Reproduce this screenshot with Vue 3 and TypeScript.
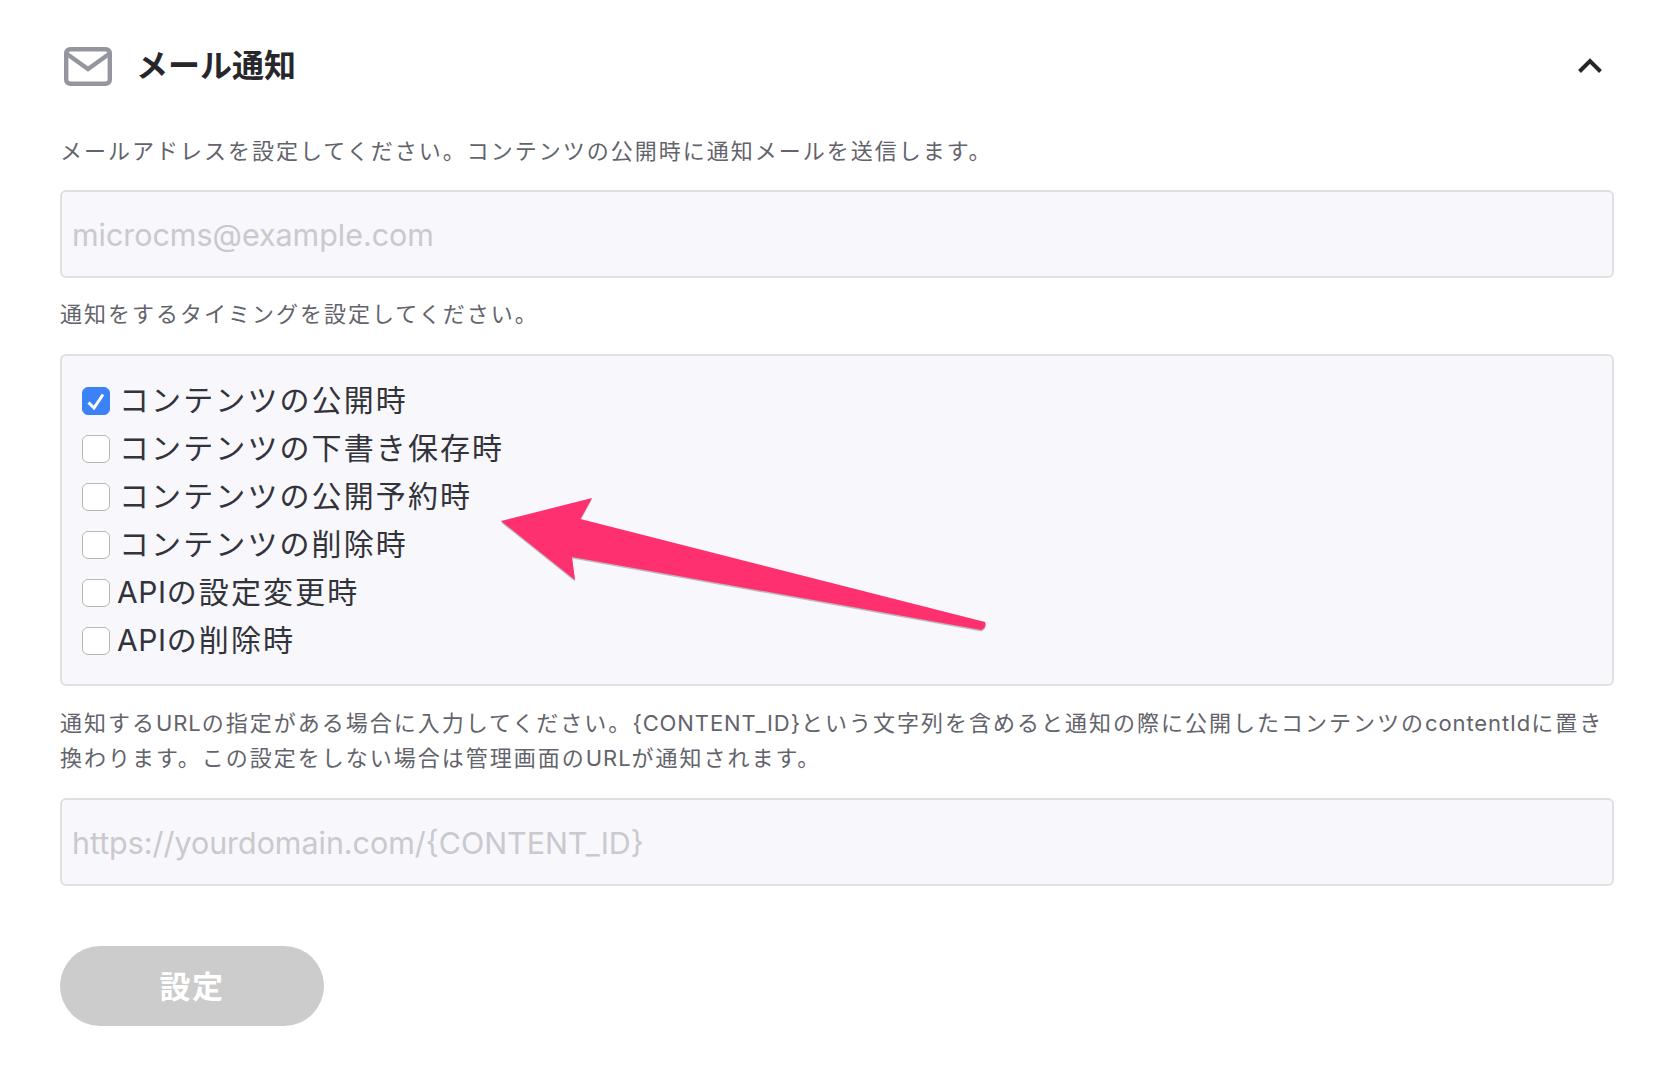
<script setup lang="ts">
import { ref } from 'vue'

const email = ref('')
const url = ref('')
const timings = ref([
  { label: 'コンテンツの公開時', checked: true },
  { label: 'コンテンツの下書き保存時', checked: false },
  { label: 'コンテンツの公開予約時', checked: false },
  { label: 'コンテンツの削除時', checked: false },
  { label: 'API', rest: 'の設定変更時', checked: false },
  { label: 'API', rest: 'の削除時', checked: false }
])
</script>

<template>
  <div class="page">
    <div class="head">
      <div class="head-title">
        <svg class="mail-icon" width="48" height="39" viewBox="0 0 48 39" fill="none">
          <rect x="2.200" y="2.200" width="43.600" height="34.600" rx="4" stroke="#95959d" stroke-width="4.400" />
          <path d="M3 7 L24 22 L45 7" stroke="#95959d" stroke-width="4.400" />
        </svg>
        <h2>メール通知</h2>
      </div>
      <svg class="chevron" width="26" height="18" viewBox="0 0 26 18" fill="none">
        <path d="M2.500 14.500 L13 4 L23.500 14.500" stroke="#26262b" stroke-width="4" />
      </svg>
    </div>

    <p class="desc first">メールアドレスを設定してください。コンテンツの公開時に通知メールを送信します。</p>
    <input class="field" type="email" placeholder="microcms@example.com" v-model="email" />

    <p class="desc second">通知をするタイミングを設定してください。</p>
    <div class="timings">
      <label class="row" v-for="t in timings" :key="t.label + t.rest">
        <span class="box" :class="{ on: t.checked }">
          <svg v-if="t.checked" width="18" height="17" viewBox="0 0 18 17" fill="none">
            <path d="M1.500 9.500 L7 15 L16 1.500" stroke="#fff" stroke-width="3" />
          </svg>
        </span>
        <span class="row-label" v-if="t.rest"><span class="latin">{{ t.label }}</span>{{ t.rest }}</span>
        <span class="row-label" v-else>{{ t.label }}</span>
      </label>
      <svg class="arrow" width="500" height="150" viewBox="0 0 500 150">
        <path d="M1 35 L92 12 L80.500 33 L485 136 Q487 141 481.500 144 L72 71 L75 94 Z" fill="#8a8a8a" opacity="0.55" transform="translate(0 1.500)" />
        <path d="M1 35 L92 12 L80.500 33 L485 136 Q487 141 481.500 144 L72 71 L75 94 Z" fill="#ff3070" />
      </svg>
    </div>

    <p class="desc third">通知する<span class="latin">URL</span>の指定がある場合に入力してください。<span class="latin">{CONTENT_ID}</span>という文字列を含めると通知の際に公開したコンテンツの<span class="latin">contentId</span>に置き換わります。この設定をしない場合は管理画面の<span class="latin">URL</span>が通知されます。</p>
    <input class="field" type="text" placeholder="https://yourdomain.com/{CONTENT_ID}" v-model="url" />

    <button class="submit" disabled>設定</button>
  </div>
</template>

<style scoped>
.page {
  box-sizing: border-box;
  width: 1614px;
  height: 1080px;
  padding-left: 60px;
  background: #ffffff;
  font-family: Inter, "Noto Sans CJK JP", sans-serif;
  overflow: hidden;
}

.head {
  height: 40px;
  margin-top: 46px;
  display: flex;
  align-items: center;
  justify-content: space-between;
  padding-right: 11px;
}

.head-title {
  display: flex;
  align-items: center;
  gap: 24px;
  padding-left: 4px;
}

.head-title h2 {
  margin: 0;
  font-size: 32px;
  font-weight: 700;
  color: #26262b;
  line-height: 40px;
}

.desc {
  margin: 0;
  font-size: 22px;
  letter-spacing: 2px;
  line-height: 35px;
  color: #63636b;
}

.row .latin {
  margin-left: -2px;
  letter-spacing: 0.600px;
}

.desc .latin {
  letter-spacing: 0.900px;
}

.first {
  margin-top: 48px;
  margin-bottom: 21px;
}

.second {
  margin-top: 19px;
  margin-bottom: 22px;
}

.third {
  margin-top: 20px;
  margin-bottom: 22px;
}

.field {
  display: block;
  box-sizing: border-box;
  width: 100%;
  height: 88px;
  padding: 2px 10px 0;
  border: 2px solid #e0e0e2;
  border-radius: 6px;
  background: #f7f7fc;
  font-family: Inter, sans-serif;
  font-size: 30.400px;
  color: #26262b;
  outline: none;
}

.field::placeholder {
  color: #c9c9ce;
  opacity: 1;
}

.timings {
  position: relative;
  box-sizing: border-box;
  padding: 21px 20px 19px;
  display: flex;
  flex-direction: column;
  border: 2px solid #e0e0e2;
  border-radius: 6px;
  background: #f7f7fc;
}

.row {
  height: 48px;
  display: flex;
  align-items: center;
  gap: 9px;
  font-size: 30px;
  letter-spacing: 2.100px;
  color: #33333a;
}

.row-label {
  padding-bottom: 6px;
}

.box {
  box-sizing: border-box;
  width: 28px;
  height: 28px;
  flex: none;
  display: flex;
  align-items: center;
  justify-content: center;
  background: #ffffff;
  border: 1.500px solid #b8b8b8;
  border-radius: 6px;
}

.box.on {
  background: #3b82f6;
  border-color: #3b82f6;
}

.arrow {
  position: absolute;
  left: 438px;
  top: 130px;
}

.submit {
  display: block;
  width: 264px;
  height: 80px;
  margin-top: 60px;
  padding-bottom: 4px;
  border: none;
  border-radius: 40px;
  background: #cccccc;
  color: #ffffff;
  font-family: inherit;
  font-size: 31px;
  font-weight: 700;
  letter-spacing: 1.500px;
}
</style>

<style>
html, body {
  background: #ffffff;
}
</style>
